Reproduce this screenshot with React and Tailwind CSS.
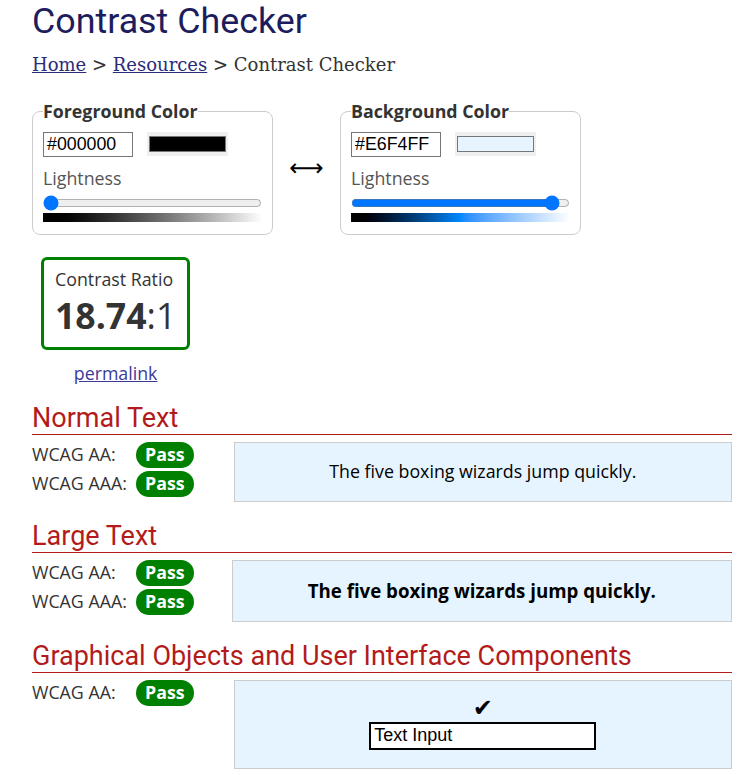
const body = "font-['Open_Sans',sans-serif]";

function Pass() {
  return (
    <span className="inline-flex h-[26px] items-center rounded-full bg-[#008000] px-[9px] text-[17.8px] font-bold text-white">
      Pass
    </span>
  );
}

function Rows({ labels }) {
  return (
    <div className="flex flex-col gap-[3px]">
      {labels.map((l) => (
        <div key={l} className="flex h-[26px] items-center">
          <span className="w-[104px] text-[17.8px] text-[#333]">{l}</span>
          <Pass />
        </div>
      ))}
    </div>
  );
}

function Heading({ children }) {
  return (
    <h2 className="border-b border-[#b31b1b] font-['Roboto',sans-serif] text-[27px] leading-[32px] text-[#b31b1b]">
      {children}
    </h2>
  );
}

// champ de couleur : saisie hex + pastille + curseur de luminosite
function ColorField({ legend, hex, swatch, value, gradient }) {
  return (
    <fieldset className="w-[241px] rounded-lg border border-[#ccc] px-[10px] pt-[7px] pb-[12px]">
      <legend className="text-[17.8px] font-bold text-[#333]">{legend}</legend>
      <div className="flex items-center gap-[14px]">
        <div className="flex h-[25px] w-[90px] items-center border border-[#767676] px-[3px] font-['Liberation_Sans',sans-serif] text-[17.8px] text-black">
          {hex}
        </div>
        <div className="h-[24px] w-[81px] bg-[#efefef] px-[2px] pt-[4px]">
          <div className={`h-[16px] w-[77px] border border-[#777] ${swatch}`} />
        </div>
      </div>
      <div className="mt-[10px] text-[17.8px] leading-[23px] text-[#555]">Lightness</div>
      <input type="range" min="0" max="100" defaultValue={value} className="mt-[5px] block h-[16px] w-[219px]" />
      <div className={`mt-[2px] h-[9px] w-[219px] ${gradient}`} />
    </fieldset>
  );
}

export default function App() {
  return (
    <div className={`${body} pl-8 pr-[19px] text-[#333]`}>
      <h1 className="font-['Roboto',sans-serif] text-[35.8px] leading-[42px] text-[#1d1d5e]">Contrast Checker</h1>
      <div className="mt-[13px] font-['DejaVu_Serif',serif] text-[18px] leading-[20px] text-[#333]">
        <a className="text-[#2b2b7a] underline">Home</a> &gt; <a className="text-[#2b2b7a] underline">Resources</a> &gt; Contrast Checker
      </div>

      <div className="mt-[23px] flex items-center">
        <ColorField
          legend="Foreground Color"
          hex="#000000"
          swatch="bg-black"
          value={0}
          gradient="bg-gradient-to-r from-black to-white"
        />
        <div className="flex w-[67px] justify-center pt-[4px] font-['DejaVu_Sans',sans-serif] text-[24px] text-black">⟷</div>
        <ColorField
          legend="Background Color"
          hex="#E6F4FF"
          swatch="bg-[#e6f4ff]"
          value={95}
          gradient="bg-gradient-to-r from-black via-[#0088ff] to-white"
        />
      </div>

      <div className="mt-[22px] ml-[9px] flex w-fit flex-col items-center">
        <div className="rounded-md border-[3px] border-[#008000] px-[11px] pt-[8px] pb-[7px]">
          <div className="text-[17.8px] leading-[23px] text-[#333]">Contrast Ratio</div>
          <div className="text-[35.6px] leading-[49px] text-[#333]">
            <span className="font-bold">18.74</span>:1
          </div>
        </div>
        <a className="mt-[12px] text-[17.8px] leading-[23px] text-[#3a3a99] underline">permalink</a>
      </div>

      <div className="mt-[17px]">
        <Heading>Normal Text</Heading>
        <div className="mt-[7px] flex items-start">
          <Rows labels={['WCAG AA:', 'WCAG AAA:']} />
          <div className="ml-10 flex h-[60px] flex-1 items-center justify-center border border-[#ccc] bg-[#e6f4ff] text-[17.8px] text-black">
            The five boxing wizards jump quickly.
          </div>
        </div>
      </div>

      <div className="mt-[18px]">
        <Heading>Large Text</Heading>
        <div className="mt-[7px] flex items-start">
          <Rows labels={['WCAG AA:', 'WCAG AAA:']} />
          <div className="ml-[38px] flex h-[62px] flex-1 items-center justify-center border border-[#ccc] bg-[#e6f4ff] text-[18.7px] font-bold text-black">
            The five boxing wizards jump quickly.
          </div>
        </div>
      </div>

      <div className="mt-[18px]">
        <Heading>Graphical Objects and User Interface Components</Heading>
        <div className="mt-[7px] flex items-start">
          <Rows labels={['WCAG AA:']} />
          <div className="ml-10 flex h-[89px] flex-1 flex-col items-center border border-[#ccc] bg-[#e6f4ff] pt-[16px]">
            <div className="font-['DejaVu_Sans',sans-serif] text-[24px] leading-[23px] text-black">✔</div>
            <div className="mt-[2px] flex h-[28px] w-[227px] items-center border-2 border-black bg-white pl-[3px] font-['Liberation_Sans',sans-serif] text-[18px] text-black">
              Text Input
            </div>
          </div>
        </div>
      </div>
    </div>
  );
}
